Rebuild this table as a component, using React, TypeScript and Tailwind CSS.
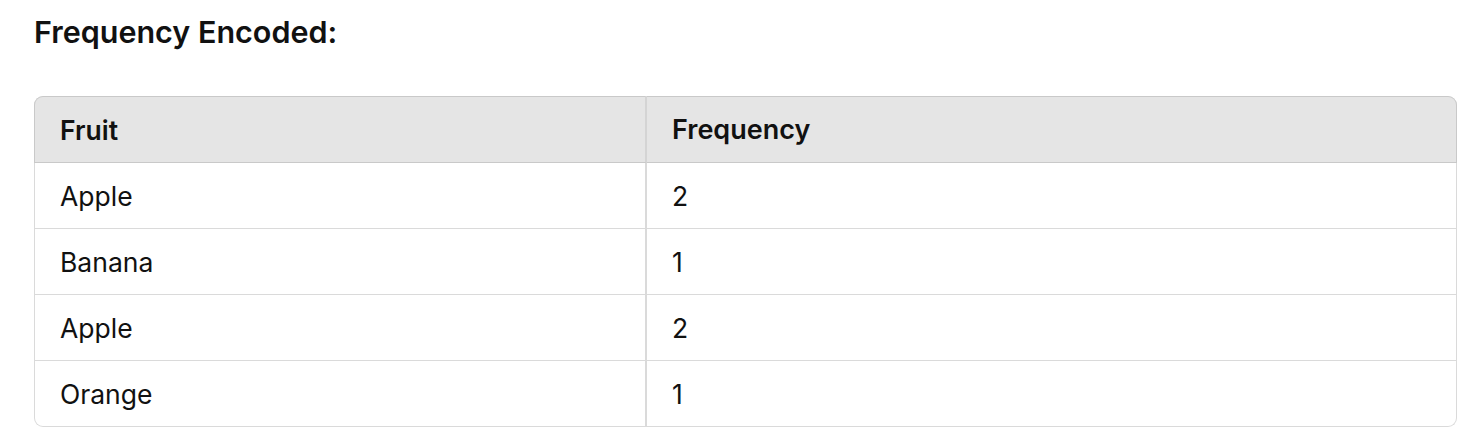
const rows = [
  { fruit: "Apple", freq: 2 },
  { fruit: "Banana", freq: 1 },
  { fruit: "Apple", freq: 2 },
  { fruit: "Orange", freq: 1 },
];

export default function App() {
  return (
    <div className="min-h-[448px] bg-white pl-[34px] pt-[12px] font-['Inter',sans-serif] text-[#111]">
      <h2 className="text-[30.5px] font-semibold leading-[40px]">Frequency Encoded:</h2>

      <table className="mt-[44px] w-[1423px] border-separate border-spacing-0 text-[26.5px]">
        <thead>
          <tr className="h-[67px] bg-[#e5e5e5]">
            <th className="w-[613px] rounded-tl-[9px] border-y border-l border-r-2 border-[#c9c9c9] border-r-[#d4d4d4] pl-[25px] pt-[2px] text-left text-[26.5px] font-semibold">
              Fruit
            </th>
            <th className="rounded-tr-[9px] border-y border-r border-[#c9c9c9] pl-[25px] pt-[2px] text-left text-[27px] font-semibold">
              Frequency
            </th>
          </tr>
        </thead>
        <tbody>
          {rows.map((row, i) => {
            const last = i === rows.length - 1;
            return (
              <tr key={i} className="h-[66px]">
                <td
                  className={`border-b border-l border-r-2 border-[#dadada] pl-[25px] pt-[2px] ${last ? "rounded-bl-[9px]" : ""}`}
                >
                  {row.fruit}
                </td>
                <td className={`border-b border-r border-[#dadada] pl-[25px] pt-[2px] ${last ? "rounded-br-[9px]" : ""}`}>
                  {row.freq}
                </td>
              </tr>
            );
          })}
        </tbody>
      </table>
    </div>
  );
}
